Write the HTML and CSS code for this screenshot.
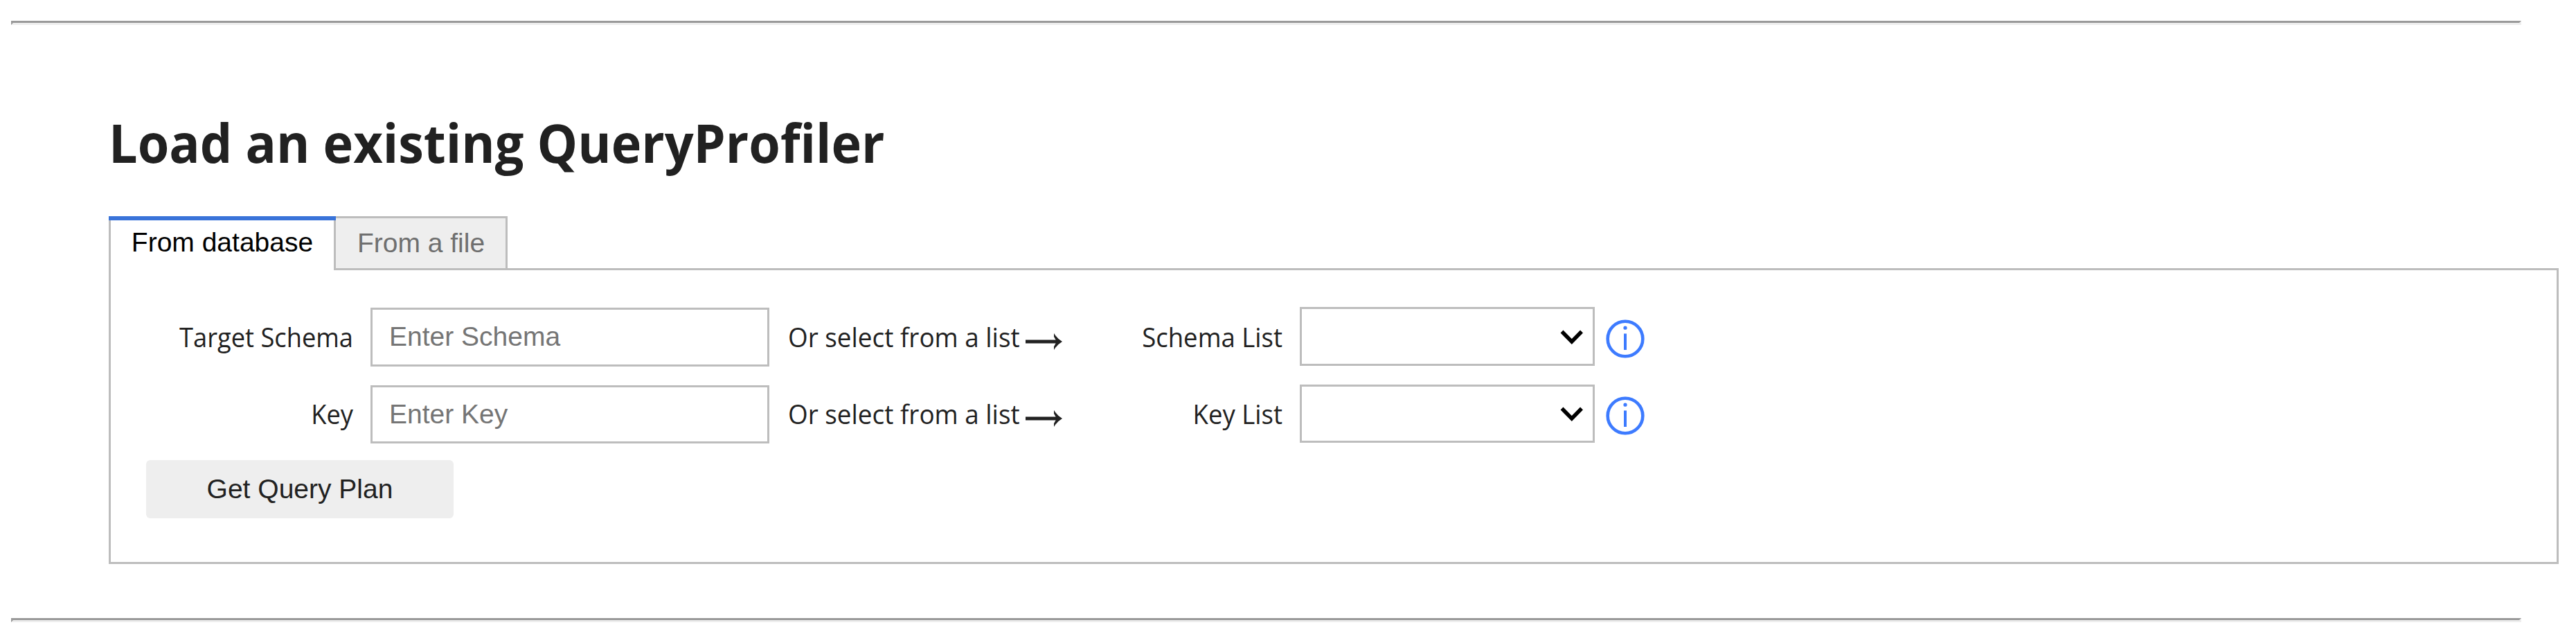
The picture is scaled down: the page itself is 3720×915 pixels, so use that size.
FILE: index.html
```html
<!DOCTYPE html>
<html lang="en">
<head>
<meta charset="utf-8">
<title>QueryProfiler</title>
<link rel="stylesheet" href="styles.css">
</head>
<body>
<hr class="rule">
<main class="loader">
  <h1 class="title">Load an existing QueryProfiler</h1>
  <div class="tabs">
    <button class="tab tab-active">From database</button>
    <button class="tab">From a file</button>
  </div>
  <form class="panel">
    <div class="row">
      <label class="label" for="schema">Target Schema</label>
      <input class="field" id="schema" placeholder="Enter Schema">
      <span class="hint">Or select from a list</span>
      <svg class="arrow" width="54" height="30" viewBox="0 0 54 30"><path d="M0 12.5H48V17.5H0z"/><path d="M41 3Q46 11 53 15Q46 19 41 27V22L45 15L41 8z"/></svg>
      <label class="label list-label" for="schema-list">Schema List</label>
      <div class="select" id="schema-list"><svg width="34" height="22" viewBox="0 0 34 22"><path class="chev" d="M2.5 2.5L16.8 17L31 2.5"/></svg></div>
      <svg class="info" width="56" height="56" viewBox="0 0 56 56"><circle class="ring" cx="28" cy="28" r="25.3"/><circle cx="28" cy="12.2" r="2.6"/><path d="M26 20.5h4V44h-4z"/></svg>
    </div>
    <div class="row row-key">
      <label class="label" for="key">Key</label>
      <input class="field" id="key" placeholder="Enter Key">
      <span class="hint">Or select from a list</span>
      <svg class="arrow" width="54" height="30" viewBox="0 0 54 30"><path d="M0 12.5H48V17.5H0z"/><path d="M41 3Q46 11 53 15Q46 19 41 27V22L45 15L41 8z"/></svg>
      <label class="label list-label" for="key-list">Key List</label>
      <div class="select" id="key-list"><svg width="34" height="22" viewBox="0 0 34 22"><path class="chev" d="M2.5 2.5L16.8 17L31 2.5"/></svg></div>
      <svg class="info" width="56" height="56" viewBox="0 0 56 56"><circle class="ring" cx="28" cy="28" r="25.3"/><circle cx="28" cy="12.2" r="2.6"/><path d="M26 20.5h4V44h-4z"/></svg>
    </div>
    <button class="submit" type="button">Get Query Plan</button>
  </form>
</main>
<hr class="rule">
</body>
</html>
```
FILE: styles.css
```css
* { box-sizing: border-box; }
body {
  margin: 0;
  padding-top: 30px;
  background: #fff;
  color: #212121;
  font: 39px/56px "Open Sans", "Noto Sans", sans-serif;
  overflow: hidden;
}
.rule {
  width: 3625px;
  height: 6px;
  margin: 0 0 0 16px;
  border: 3px solid;
  border-color: #9a9a9a #eee #eee #9a9a9a;
}
.loader { padding: 107px 25px 78px 157px; }
.title {
  width: max-content;
  height: 169px;
  margin: 0;
  font-size: 77px;
  line-height: 126px;
  font-weight: 700;
  white-space: nowrap;
  transform: scaleX(.957);
  transform-origin: left;
}
.tabs { display: flex; height: 75px; }
.tab {
  height: 75px;
  width: 248px;
  margin: 0;
  padding: 0 0 1px 1px;
  border: solid #bdbdbd;
  border-width: 3px 3px 0 0;
  background: #eee;
  color: #6f6f6f;
  font: 39px/46px "Liberation Sans", sans-serif;
}
.tab-active {
  position: relative;
  width: 328px;
  height: 78px;
  padding: 0 0 3px;
  border-width: 0 3px 0 3px;
  background: #fff;
  color: #000;
}
.tab-active::before {
  content: "";
  position: absolute;
  top: 0;
  left: -3px;
  right: -3px;
  height: 6px;
  background: #3973d9;
}
.panel {
  height: 427px;
  padding: 53px 51px 0;
  border: 3px solid #bdbdbd;
}
.row { display: flex; height: 112px; }
.row-key { height: 111px; }
.label {
  width: 299px;
  text-align: right;
  white-space: nowrap;
  line-height: 85px;
  transform: scaleX(.93);
  transform-origin: right;
}
.field {
  width: 576px;
  height: 85px;
  margin: 1px 0 0 25px;
  padding: 0 24px 1px;
  border: 3px solid #bdbdbd;
  background: #fff;
  font: 39px "Liberation Sans", sans-serif;
}
.row-key .field, .row-key .select { height: 84px; }
.row-key .label, .row-key .hint { line-height: 83px; }
.field::placeholder { color: #757575; opacity: 1; }
.hint {
  width: 343px;
  margin-left: 27px;
  line-height: 85px;
  white-space: nowrap;
  transform: scaleX(.945);
  transform-origin: left;
}
.arrow { margin-top: 35px; fill: #212121; }
.row-key .arrow { margin-top: 34px; }
.list-label { width: 317px; transform: scaleX(.937); }
.select {
  width: 426px;
  height: 85px;
  margin-left: 25px;
  padding: 30px 13px 0 0;
  border: 3px solid #bdbdbd;
  display: flex;
  justify-content: flex-end;
}
.row-key .select { padding-top: 29px; }
.chev { fill: none; stroke: #000; stroke-width: 5.5; }
.info { margin: 18px 0 0 16px; fill: #3d7bff; }
.row-key .info { margin-top: 17px; }
.ring { fill: none; stroke: #3d7bff; stroke-width: 4.6; }
.submit {
  display: block;
  width: 444px;
  height: 84px;
  margin: -2px 0 0;
  padding: 0 0 1px;
  border: 0;
  border-radius: 6px;
  background: #eee;
  color: #212121;
  font: 39px "Liberation Sans", sans-serif;
}
```
